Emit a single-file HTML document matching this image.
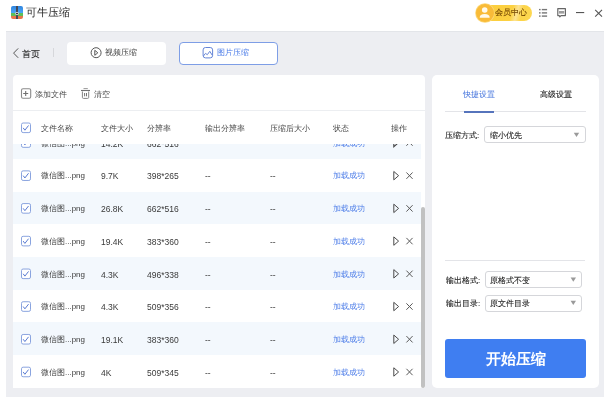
<!DOCTYPE html>
<html><head><meta charset="utf-8">
<style>
*{box-sizing:border-box;margin:0;padding:0}
html,body{width:604px;height:400px;overflow:hidden;background:#fff;font-family:"Liberation Sans",sans-serif;color:#333}
.a{position:absolute}
.t{position:absolute;will-change:transform;white-space:nowrap;line-height:1}
#gray{left:6px;top:31px;width:598px;height:365.75px;background:#edeef2;border-top:0.6px solid #e3e5e9}
.tab{height:23px;width:99px;background:#fff;border-radius:4px;top:41.5px}
.panel{background:#fff}
.row{left:13px;width:408px;height:32.72px}
.row.b{background:#f3f8fd}
.cell{position:absolute;will-change:transform;white-space:nowrap;line-height:1;font-size:8px;color:#3a3a3a}
.cell.n{font-size:8.5px}
.hd{color:#474747}
</style></head><body>
<!-- title bar -->
<div class="a" style="left:11px;top:5.5px;width:12.3px;height:13.5px;border-radius:2px;overflow:hidden">
  <div class="a" style="left:0;top:0;width:13px;height:7.5px;background:linear-gradient(#2f84de,#4ba7f7)"></div>
  <div class="a" style="left:0;top:7.3px;width:13px;height:3px;background:#5cbf5a"></div>
  <div class="a" style="left:0;top:10.3px;width:13px;height:3.3px;background:#e7754a"></div>
  <div class="a" style="left:5.1px;top:0;width:2px;height:14px;background:#434956"></div>
  <div class="a" style="left:3.9px;top:6.6px;width:4.4px;height:2.6px;background:#363a44;border:0.7px solid #e6e6e6;border-radius:1.3px"></div>
</div>
<div class="t" style="left:25.7px;top:7.3px;font-size:10.8px;color:#2a2a2a">可牛压缩</div>

<!-- vip pill -->
<div class="a" style="left:482px;top:5px;width:49.5px;height:16px;border-radius:8px;background:linear-gradient(105deg,#fccd3c 0%,#fcd142 58%,#fde392 68%,#fcd448 78%,#fdd854 100%)"></div>
<div class="a" style="left:476px;top:3.5px;width:17.5px;height:18px;border-radius:50%;background:#f9bb38;box-shadow:0 0 0 0.8px #fcd777"></div>
<div class="t" style="left:495.4px;top:9.3px;font-size:8px;color:#714500;-webkit-text-stroke:0.1px #714500">会员中心</div>

<!-- gray area -->
<div id="gray" class="a"></div>

<!-- nav -->
<div class="t" style="left:22px;top:49.6px;font-size:9px;color:#1e1e1e;-webkit-text-stroke:0.1px #1e1e1e">首页</div>
<div class="a" style="left:53px;top:48px;width:1px;height:9px;background:#d6d7db"></div>
<div class="a tab" style="left:67px"></div>
<div class="t" style="left:105px;top:49px;font-size:8px;color:#444">视频压缩</div>
<div class="a tab" style="left:179px;border:1px solid #7e9ee6"></div>
<div class="t" style="left:217px;top:49px;font-size:8px;color:#4a7be8">图片压缩</div>

<!-- left panel -->
<div class="a panel" style="left:13px;top:74.5px;width:412px;height:313.5px;border-radius:4px 4px 0 0"></div>
<div class="t" style="left:35px;top:91px;font-size:8px;color:#484848">添加文件</div>
<div class="t" style="left:94px;top:91px;font-size:8px;color:#484848">清空</div>

<!-- rows -->
<div class="a row b" style="top:126.08px"></div>
<div class="cell" style="left:41px;top:139.64px">微信图...png</div>
<div class="cell n" style="left:100.5px;top:139.64px">14.2K</div>
<div class="cell n" style="left:147px;top:139.64px">662*516</div>
<div class="cell" style="left:333px;top:139.64px;color:#4a7be8">加载成功</div>
<div class="a row" style="top:158.80px"></div>
<div class="cell" style="left:41px;top:172.36px">微信图...png</div>
<div class="cell n" style="left:100.5px;top:172.36px">9.7K</div>
<div class="cell n" style="left:147px;top:172.36px">398*265</div>
<div class="cell n" style="left:205px;top:172.36px">--</div>
<div class="cell n" style="left:270px;top:172.36px">--</div>
<div class="cell" style="left:333px;top:172.36px;color:#4a7be8">加载成功</div>
<div class="a row b" style="top:191.52px"></div>
<div class="cell" style="left:41px;top:205.08px">微信图...png</div>
<div class="cell n" style="left:100.5px;top:205.08px">26.8K</div>
<div class="cell n" style="left:147px;top:205.08px">662*516</div>
<div class="cell n" style="left:205px;top:205.08px">--</div>
<div class="cell n" style="left:270px;top:205.08px">--</div>
<div class="cell" style="left:333px;top:205.08px;color:#4a7be8">加载成功</div>
<div class="a row" style="top:224.24px"></div>
<div class="cell" style="left:41px;top:237.80px">微信图...png</div>
<div class="cell n" style="left:100.5px;top:237.80px">19.4K</div>
<div class="cell n" style="left:147px;top:237.80px">383*360</div>
<div class="cell n" style="left:205px;top:237.80px">--</div>
<div class="cell n" style="left:270px;top:237.80px">--</div>
<div class="cell" style="left:333px;top:237.80px;color:#4a7be8">加载成功</div>
<div class="a row b" style="top:256.96px"></div>
<div class="cell" style="left:41px;top:270.52px">微信图...png</div>
<div class="cell n" style="left:100.5px;top:270.52px">4.3K</div>
<div class="cell n" style="left:147px;top:270.52px">496*338</div>
<div class="cell n" style="left:205px;top:270.52px">--</div>
<div class="cell n" style="left:270px;top:270.52px">--</div>
<div class="cell" style="left:333px;top:270.52px;color:#4a7be8">加载成功</div>
<div class="a row" style="top:289.68px"></div>
<div class="cell" style="left:41px;top:303.24px">微信图...png</div>
<div class="cell n" style="left:100.5px;top:303.24px">4.3K</div>
<div class="cell n" style="left:147px;top:303.24px">509*356</div>
<div class="cell n" style="left:205px;top:303.24px">--</div>
<div class="cell n" style="left:270px;top:303.24px">--</div>
<div class="cell" style="left:333px;top:303.24px;color:#4a7be8">加载成功</div>
<div class="a row b" style="top:322.40px"></div>
<div class="cell" style="left:41px;top:335.96px">微信图...png</div>
<div class="cell n" style="left:100.5px;top:335.96px">19.1K</div>
<div class="cell n" style="left:147px;top:335.96px">383*360</div>
<div class="cell n" style="left:205px;top:335.96px">--</div>
<div class="cell n" style="left:270px;top:335.96px">--</div>
<div class="cell" style="left:333px;top:335.96px;color:#4a7be8">加载成功</div>
<div class="a row" style="top:355.12px"></div>
<div class="cell" style="left:41px;top:368.68px">微信图...png</div>
<div class="cell n" style="left:100.5px;top:368.68px">4K</div>
<div class="cell n" style="left:147px;top:368.68px">509*345</div>
<div class="cell n" style="left:205px;top:368.68px">--</div>
<div class="cell n" style="left:270px;top:368.68px">--</div>
<div class="cell" style="left:333px;top:368.68px;color:#4a7be8">加载成功</div>
<svg class="a" style="left:0;top:0" width="604" height="400">
<rect x="21.5" y="137.74" width="9" height="9.6" rx="1.6" fill="#fff" stroke="#8aa4df" stroke-width="1"/>
<path d="M23.4 142.84 L24.9 144.84 L28.3 140.44" fill="none" stroke="#5a7bd2" stroke-width="1" stroke-linejoin="round" stroke-linecap="round"/>
<path d="M393.8 138.34 L393.8 146.74 L398.6 142.54 Z" fill="none" stroke="#444" stroke-width="1.1"/>
<path d="M406.4 139.34 L412.6 145.74 M412.6 139.34 L406.4 145.74" stroke="#5a5a5a" stroke-width="1"/>
</svg>

<!-- header -->
<div class="a" style="left:13px;top:110px;width:412px;height:34px;background:#fff;border-top:1px solid #eceef1"></div>
<div class="cell hd" style="left:40.5px;top:125px">文件名称</div>
<div class="cell hd" style="left:100.5px;top:125px">文件大小</div>
<div class="cell hd" style="left:147px;top:125px">分辨率</div>
<div class="cell hd" style="left:205px;top:125px">输出分辨率</div>
<div class="cell hd" style="left:270px;top:125px">压缩后大小</div>
<div class="cell hd" style="left:333px;top:125px">状态</div>
<div class="cell hd" style="left:391px;top:125px">操作</div>

<!-- scrollbar -->
<div class="a" style="left:421px;top:207px;width:4px;height:181px;background:#c1c1c1;border-radius:2px"></div>

<!-- right panel -->
<div class="a panel" style="left:431.5px;top:74.5px;width:167px;height:313.5px;border-radius:5px"></div>
<div class="t" style="left:463px;top:91px;font-size:8px;color:#3f70dc">快捷设置</div>
<div class="t" style="left:539.8px;top:91px;font-size:8px;color:#1e1e1e;-webkit-text-stroke:0.12px #1e1e1e">高级设置</div>
<div class="a" style="left:445px;top:111px;width:141px;height:1px;background:#e3e4e8"></div>
<div class="a" style="left:464px;top:111px;width:30px;height:2px;background:#5674bc"></div>
<div class="t" style="left:444.5px;top:131.5px;font-size:8px;color:#222;-webkit-text-stroke:0.1px #222">压缩方式:</div>
<div class="a" style="left:484px;top:126.3px;width:102px;height:16.5px;border:1px solid #d5d6da;border-radius:3px"></div>
<div class="t" style="left:490px;top:131.5px;font-size:8px;color:#222;-webkit-text-stroke:0.1px #222">缩小优先</div>

<div class="a" style="left:445px;top:260px;width:140px;height:1px;background:#e3e4e8"></div>
<div class="t" style="left:445.5px;top:277px;font-size:8px;color:#222;-webkit-text-stroke:0.1px #222">输出格式:</div>
<div class="a" style="left:484.5px;top:271px;width:97.5px;height:16.8px;border:1px solid #d5d6da;border-radius:3px"></div>
<div class="t" style="left:490px;top:277px;font-size:8px;color:#222;-webkit-text-stroke:0.1px #222">原格式不变</div>
<div class="t" style="left:445.5px;top:300px;font-size:8px;color:#222;-webkit-text-stroke:0.1px #222">输出目录:</div>
<div class="a" style="left:484.5px;top:294.5px;width:97.5px;height:17px;border:1px solid #d5d6da;border-radius:3px"></div>
<div class="t" style="left:490px;top:300px;font-size:8px;color:#222;-webkit-text-stroke:0.1px #222">原文件目录</div>

<div class="a" style="left:445px;top:338.5px;width:140.5px;height:39px;background:#3f7ef1;border-radius:3px"></div>
<div class="t" style="left:486px;top:351.5px;font-size:14.5px;font-weight:bold;color:#fff">开始压缩</div>

<!-- icon overlay -->
<svg class="a" style="left:0;top:0" width="604" height="400">
<!-- vip person -->
<circle cx="484.7" cy="10" r="2.8" fill="#fffaea"/><path d="M479.7 17.7 Q479.7 14.1 484.7 14.1 Q489.7 14.1 489.7 17.7 Z" fill="#fffaea"/>
<!-- list -->
<g fill="#777"><rect x="539" y="8.9" width="1.6" height="1.4"/><rect x="539" y="12.2" width="1.6" height="1.4"/><rect x="539" y="15.4" width="1.6" height="1.4"/>
<rect x="541.8" y="8.9" width="5.3" height="1.4"/><rect x="541.8" y="12.2" width="5.3" height="1.4"/><rect x="541.8" y="15.4" width="5.3" height="1.4"/></g>
<!-- chat -->
<path d="M557.8 8.7 H565.4 V15.6 H561 L559.8 16.9 L559.3 15.6 H557.8 Z" fill="none" stroke="#666" stroke-width="1.2" stroke-linejoin="round"/>
<rect x="559" y="11" width="5.2" height="2.6" fill="#9d9d9d"/>
<!-- minimize -->
<rect x="576" y="12" width="8.2" height="1.1" fill="#555"/>
<!-- close -->
<path d="M595.2 9.8 L602 16.6 M602 9.8 L595.2 16.6" stroke="#555" stroke-width="1.1"/>
<!-- back chevron -->
<path d="M18.2 48.4 L13.6 53.1 L18.2 57.8" fill="none" stroke="#555" stroke-width="1"/>
<!-- video icon -->
<circle cx="96.1" cy="52.7" r="5" fill="none" stroke="#555" stroke-width="1"/>
<path d="M94.8 50.3 L94.8 55.3 L97.8 52.8 Z" fill="none" stroke="#555" stroke-width="1" stroke-linejoin="round"/>
<!-- image icon -->
<rect x="203.1" y="47.5" width="9.5" height="10.4" rx="2.4" fill="none" stroke="#6585d6" stroke-width="1"/>
<path d="M203.4 56 L205.5 53.4 L207.3 54.7 L209.8 51.3 L212.4 55.5" fill="none" stroke="#6585d6" stroke-width="1"/>
<!-- plus square -->
<rect x="21.5" y="88.7" width="9.2" height="9.6" rx="1.5" fill="none" stroke="#8a8a8a" stroke-width="1.1"/>
<path d="M23.2 93.5 H28.2 M25.7 91 V96" stroke="#707070" stroke-width="1.1"/>
<!-- trash -->
<path d="M83.5 88.6 H87.8" stroke="#999" stroke-width="1"/>
<path d="M81 90.5 H90" stroke="#707070" stroke-width="1.1"/>
<path d="M82.4 91.5 V97.4 Q82.4 98.4 83.4 98.4 H87.7 Q88.7 98.4 88.7 97.4 V91.5" fill="none" stroke="#858585" stroke-width="1"/>
<path d="M84.6 93 V96.3 M86.5 93 V96.3" stroke="#747474" stroke-width="1"/>
<!-- header checkbox -->
<rect x="21.5" y="123" width="9" height="9.6" rx="1.6" fill="#fff" stroke="#8aa4df" stroke-width="1"/>
<path d="M23.4 128.2 L24.9 130.2 L28.3 125.8" fill="none" stroke="#5a7bd2" stroke-width="1" stroke-linejoin="round" stroke-linecap="round"/>
<rect x="21.5" y="170.86" width="9" height="9.6" rx="1.6" fill="#fff" stroke="#8aa4df" stroke-width="1"/>
<path d="M23.4 175.96 L24.9 177.96 L28.3 173.56" fill="none" stroke="#5a7bd2" stroke-width="1" stroke-linejoin="round" stroke-linecap="round"/>
<path d="M393.8 171.46 L393.8 179.86 L398.6 175.66 Z" fill="none" stroke="#4a4a4a" stroke-width="1" stroke-linejoin="round"/>
<path d="M406.4 172.46 L412.6 178.86 M412.6 172.46 L406.4 178.86" stroke="#5a5a5a" stroke-width="1"/>
<rect x="21.5" y="203.58" width="9" height="9.6" rx="1.6" fill="#fff" stroke="#8aa4df" stroke-width="1"/>
<path d="M23.4 208.68 L24.9 210.68 L28.3 206.28" fill="none" stroke="#5a7bd2" stroke-width="1" stroke-linejoin="round" stroke-linecap="round"/>
<path d="M393.8 204.18 L393.8 212.58 L398.6 208.38 Z" fill="none" stroke="#4a4a4a" stroke-width="1" stroke-linejoin="round"/>
<path d="M406.4 205.18 L412.6 211.58 M412.6 205.18 L406.4 211.58" stroke="#5a5a5a" stroke-width="1"/>
<rect x="21.5" y="236.30" width="9" height="9.6" rx="1.6" fill="#fff" stroke="#8aa4df" stroke-width="1"/>
<path d="M23.4 241.40 L24.9 243.40 L28.3 239.00" fill="none" stroke="#5a7bd2" stroke-width="1" stroke-linejoin="round" stroke-linecap="round"/>
<path d="M393.8 236.90 L393.8 245.30 L398.6 241.10 Z" fill="none" stroke="#4a4a4a" stroke-width="1" stroke-linejoin="round"/>
<path d="M406.4 237.90 L412.6 244.30 M412.6 237.90 L406.4 244.30" stroke="#5a5a5a" stroke-width="1"/>
<rect x="21.5" y="269.02" width="9" height="9.6" rx="1.6" fill="#fff" stroke="#8aa4df" stroke-width="1"/>
<path d="M23.4 274.12 L24.9 276.12 L28.3 271.72" fill="none" stroke="#5a7bd2" stroke-width="1" stroke-linejoin="round" stroke-linecap="round"/>
<path d="M393.8 269.62 L393.8 278.02 L398.6 273.82 Z" fill="none" stroke="#4a4a4a" stroke-width="1" stroke-linejoin="round"/>
<path d="M406.4 270.62 L412.6 277.02 M412.6 270.62 L406.4 277.02" stroke="#5a5a5a" stroke-width="1"/>
<rect x="21.5" y="301.74" width="9" height="9.6" rx="1.6" fill="#fff" stroke="#8aa4df" stroke-width="1"/>
<path d="M23.4 306.84 L24.9 308.84 L28.3 304.44" fill="none" stroke="#5a7bd2" stroke-width="1" stroke-linejoin="round" stroke-linecap="round"/>
<path d="M393.8 302.34 L393.8 310.74 L398.6 306.54 Z" fill="none" stroke="#4a4a4a" stroke-width="1" stroke-linejoin="round"/>
<path d="M406.4 303.34 L412.6 309.74 M412.6 303.34 L406.4 309.74" stroke="#5a5a5a" stroke-width="1"/>
<rect x="21.5" y="334.46" width="9" height="9.6" rx="1.6" fill="#fff" stroke="#8aa4df" stroke-width="1"/>
<path d="M23.4 339.56 L24.9 341.56 L28.3 337.16" fill="none" stroke="#5a7bd2" stroke-width="1" stroke-linejoin="round" stroke-linecap="round"/>
<path d="M393.8 335.06 L393.8 343.46 L398.6 339.26 Z" fill="none" stroke="#4a4a4a" stroke-width="1" stroke-linejoin="round"/>
<path d="M406.4 336.06 L412.6 342.46 M412.6 336.06 L406.4 342.46" stroke="#5a5a5a" stroke-width="1"/>
<rect x="21.5" y="367.18" width="9" height="9.6" rx="1.6" fill="#fff" stroke="#8aa4df" stroke-width="1"/>
<path d="M23.4 372.28 L24.9 374.28 L28.3 369.88" fill="none" stroke="#5a7bd2" stroke-width="1" stroke-linejoin="round" stroke-linecap="round"/>
<path d="M393.8 367.78 L393.8 376.18 L398.6 371.98 Z" fill="none" stroke="#4a4a4a" stroke-width="1" stroke-linejoin="round"/>
<path d="M406.4 368.78 L412.6 375.18 M412.6 368.78 L406.4 375.18" stroke="#5a5a5a" stroke-width="1"/>
<!-- dropdown arrows -->
<path d="M573.8 132.8 h5.4 l-2.7 4.2 z" fill="#9a9a9a"/>
<path d="M570.6 277.6 h5.4 l-2.7 4.2 z" fill="#9a9a9a"/>
<path d="M570.6 300.8 h5.4 l-2.7 4.2 z" fill="#9a9a9a"/>
</svg>
</body></html>
